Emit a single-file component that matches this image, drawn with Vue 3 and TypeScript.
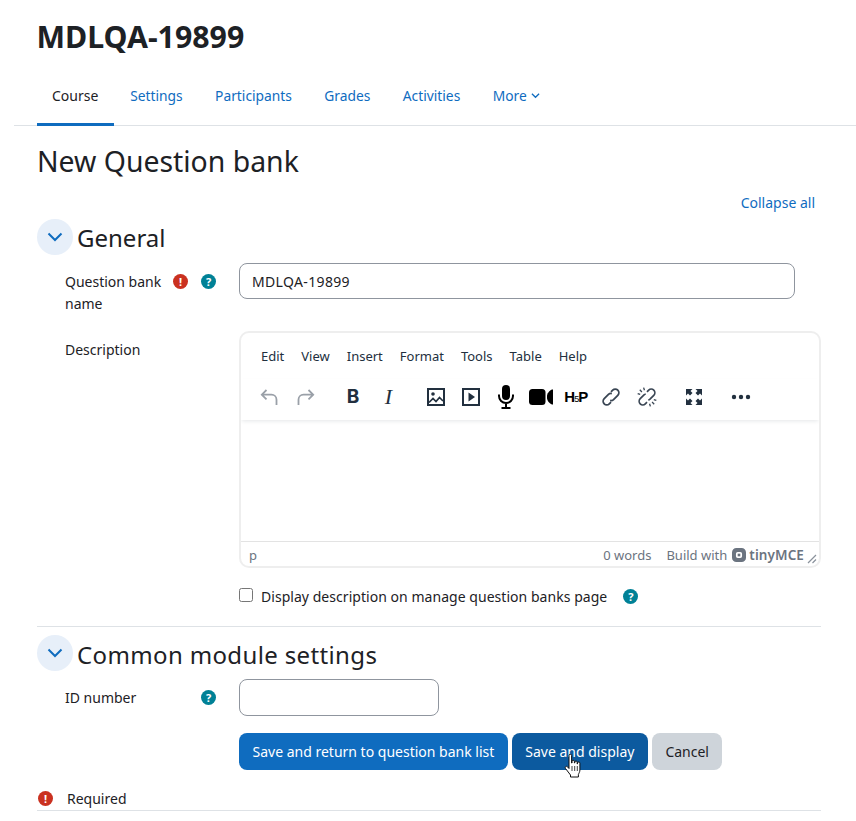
<script setup lang="ts">
const tabs = ["Settings", "Participants", "Grades", "Activities"];
const menus = ["Edit", "View", "Insert", "Format", "Tools", "Table", "Help"];
</script>

<template>
  <div class="page">
    <h1 class="title">MDLQA-19899</h1>

    <nav class="tabs">
      <a class="tab active">Course</a>
      <a v-for="t in tabs" :key="t" class="tab">{{ t }}</a>
      <a class="tab more">
        More
        <svg width="9" height="9" viewBox="0 0 10 10"><path d="M1 3l4 4 4-4" fill="none" stroke="#0f6cbf" stroke-width="1.4" /></svg>
      </a>
    </nav>

    <main class="content">
      <h2 class="heading">New Question bank</h2>
      <div class="collapse-row"><a>Collapse all</a></div>

      <div class="section-head">
        <span class="chevron">
          <svg width="16" height="16" viewBox="0 0 16 16"><path d="M1.500 4.500L8 11l6.500-6.500" fill="none" stroke="#0f6cbf" stroke-width="2" /></svg>
        </span>
        <h3>General</h3>
      </div>

      <div class="row name-row">
        <div class="label">
          <span class="label-text">Question bank name</span>
          <span class="badge red">!</span>
          <span class="badge teal">?</span>
        </div>
        <input class="text-input wide" value="MDLQA-19899" />
      </div>

      <div class="row desc-row">
        <div class="label"><span class="label-text">Description</span></div>
        <div class="control">
          <div class="editor">
            <div class="menubar">
              <span v-for="m in menus" :key="m">{{ m }}</span>
            </div>
            <div class="toolbar">
              <span class="tb">
                <svg width="20" height="20" viewBox="0 0 20 20"><path d="M7.500 3L2.800 7.700l4.700 4.700M3 7.700h9.500a5 5 0 0 1 5 5V18" fill="none" stroke="#9aa0a8" stroke-width="1.800" /></svg>
              </span>
              <span class="tb redo">
                <svg width="20" height="20" viewBox="0 0 20 20"><path d="M12.500 3l4.700 4.700-4.700 4.700M17 7.700H7.500a5 5 0 0 0-5 5V18" fill="none" stroke="#9aa0a8" stroke-width="1.800" /></svg>
              </span>
              <span class="tb group"><span class="glyph bold">B</span></span>
              <span class="tb"><span class="glyph italic">I</span></span>
              <span class="tb group">
                <svg width="20" height="20" viewBox="0 0 20 20"><rect x="2" y="2" width="16" height="16" fill="none" stroke="#22303f" stroke-width="2" /><circle cx="7" cy="7" r="1.800" fill="#22303f" /><path d="M3 15.500l4-4 3 3 3.500-4 3.500 3.500" fill="none" stroke="#22303f" stroke-width="1.700" /></svg>
              </span>
              <span class="tb">
                <svg width="20" height="20" viewBox="0 0 20 20"><rect x="2" y="2" width="16" height="16" fill="none" stroke="#22303f" stroke-width="2" /><path d="M7.500 5.500v9L14 10z" fill="#22303f" /></svg>
              </span>
              <span class="tb">
                <svg width="18" height="24" viewBox="0 0 18 24"><rect x="5" y="0" width="8" height="15" rx="4" fill="#000" /><path d="M2 9.500V11a7 7 0 0 0 14 0V9.500M9 18v4.500M4.500 23h9" fill="none" stroke="#000" stroke-width="2" /></svg>
              </span>
              <span class="tb">
                <svg width="24" height="16" viewBox="0 0 24 16"><rect x="0" y="0" width="16.500" height="16" rx="3.500" fill="#000" /><path d="M18 7c0-2 2-5.500 5-6.500h1v15h-1c-3-1-5-4.500-5-6.500z" fill="#000" /></svg>
              </span>
              <span class="tb"><span class="glyph h5p">H<span class="five">5</span>P</span></span>
              <span class="tb">
                <svg width="24" height="24" viewBox="0 0 20 20"><g transform="rotate(-45 10 10)" fill="none" stroke="#3a4654" stroke-width="1.500"><path d="M7 13H5a3 3 0 0 1 0-6h5a3 3 0 0 1 2.500 1.500" /><path d="M13 7h2a3 3 0 0 1 0 6h-5a3 3 0 0 1-2.500-1.500" /></g></svg>
              </span>
              <span class="tb">
                <svg width="24" height="24" viewBox="0 0 20 20"><g transform="rotate(-45 10 10)" fill="none" stroke="#3a4654" stroke-width="1.400"><path d="M7 13H5a3 3 0 0 1 0-6h4.500a3 3 0 0 1 1.500.5" /><path d="M13 7h2a3 3 0 0 1 0 6h-4.500a3 3 0 0 1-1.500-.5" /><path d="M10 1.500v2.500M6.500 2.500l1 2M13.500 2.500l-1 2M10 16v2.500M6.500 17.500l1-2M13.500 17.500l-1-2" stroke-width="1.100" /></g></svg>
              </span>
              <span class="tb group">
                <svg width="16" height="16" viewBox="0 0 16 16"><path d="M0 0h6.500L4.500 2l2 2L4 6.500l-2-2-2 2zM16 0v6.500l-2-2-2 2L9.500 4l2-2-2-2zM0 16V9.500l2 2 2-2L6.500 12l-2 2 2 2zM16 16H9.500l2-2-2-2L12 9.500l2 2 2-2z" fill="#22303f" /></svg>
              </span>
              <span class="tb group">
                <svg width="20" height="20" viewBox="0 0 20 20"><circle cx="3" cy="10" r="2.200" fill="#22303f" /><circle cx="10" cy="10" r="2.200" fill="#22303f" /><circle cx="17" cy="10" r="2.200" fill="#22303f" /></svg>
              </span>
            </div>
            <div class="edit-area"></div>
            <div class="statusbar">
              <span class="path">p</span>
              <span class="spacer"></span>
              <span>0 words</span>
              <span class="build">Build with</span>
              <svg class="tiny-logo" viewBox="0 0 16 16"><path fill-rule="evenodd" d="M5 0h6a5 5 0 0 1 5 5v6a5 5 0 0 1-5 5H5a5 5 0 0 1-5-5V5a5 5 0 0 1 5-5zm1.500 4.500A2 2 0 0 0 4.500 6.500v3a2 2 0 0 0 2 2h3a2 2 0 0 0 2-2v-3a2 2 0 0 0-2-2z" fill="#6b7480" /><rect x="6.500" y="6.500" width="3" height="3" fill="#6b7480" /></svg>
              <span class="tiny">tinyMCE</span>
              <svg class="grip" width="10" height="10" viewBox="0 0 10 10"><path d="M1 9l8-8M5.500 9L9 5.500" stroke="#8a929c" stroke-width="1.200" /></svg>
            </div>
          </div>
          <label class="check-row">
            <span class="checkbox"></span>
            <span class="check-text">Display description on manage question banks page</span>
            <span class="badge teal check-help">?</span>
          </label>
        </div>
      </div>

      <div class="section-head common">
        <span class="chevron">
          <svg width="16" height="16" viewBox="0 0 16 16"><path d="M1.500 4.500L8 11l6.500-6.500" fill="none" stroke="#0f6cbf" stroke-width="2" /></svg>
        </span>
        <h3>Common module settings</h3>
      </div>

      <div class="row id-row">
        <div class="label">
          <span class="label-text">ID number</span>
          <span class="badge teal">?</span>
        </div>
        <input class="text-input short" />
      </div>

      <div class="actions">
        <button class="btn primary">Save and return to question bank list</button>
        <button class="btn primary hover">
          Save and display
          <svg class="cursor" width="18" height="26" viewBox="0 0 18 26"><path d="M5 1.500a1.300 1.300 0 0 1 2.600 0V9h.4V7.500a1.200 1.200 0 0 1 2.400 0V9h.4V8.200a1.200 1.200 0 0 1 2.400 0V10h.3V9.200a1.200 1.200 0 0 1 2.400 0V16c0 2-1 3-1.500 4.500V23H6.500v-2L1.500 14.500c-1-1.500.8-3 2-1.700L5 14.500z" fill="#fff" stroke="#111" stroke-width="1" /><path d="M8 12v5M10.700 12v5M13.300 12v5" stroke="#111" stroke-width=".8" /></svg>
        </button>
        <button class="btn secondary">Cancel</button>
      </div>

      <div class="required">
        <span class="badge red">!</span>
        <span>Required</span>
      </div>
    </main>
  </div>
</template>

<style>
html,
body {
  margin: 0;
  background: #fff;
}
</style>

<style scoped>
.page {
  width: 856px;
  height: 821px;
  overflow: hidden;
  font-family: "Noto Sans", "Open Sans", sans-serif;
  font-size: 14px;
  color: #1d2125;
}

.title {
  margin: 0;
  padding: 17px 0 0 36.500px;
  height: 51px;
  font-size: 30.300px;
  line-height: 40px;
  font-weight: 700;
}

.tabs {
  display: flex;
  margin-left: 14px;
  padding-left: 23px;
  height: 58px;
  border-bottom: 1px solid #dee2e6;
  box-sizing: border-box;
}

.tab {
  display: flex;
  align-items: center;
  gap: 4px;
  height: 58px;
  padding: 0 16.200px 4px;
  box-sizing: border-box;
  color: #0f6cbf;
  font-size: 13.800px;
  white-space: nowrap;
}

.tab.active {
  color: #1d2125;
  width: 77px;
  font-size: 14px;
  padding: 0 0 0 15px;
  border-bottom: 3px solid #0f6cbf;
}

.content {
  padding: 0 35px 0 37px;
}

.heading {
  margin: 0;
  padding-top: 15px;
  font-size: 28.400px;
  line-height: 40px;
  font-weight: 400;
}

.collapse-row {
  display: flex;
  justify-content: flex-end;
  padding-right: 6px;
  height: 20px;
  margin-top: 12px;
  line-height: 20px;
  color: #0f6cbf;
}

.section-head {
  display: flex;
  align-items: center;
  gap: 4px;
  margin-top: 6px;
  height: 36px;
}

.section-head h3 {
  margin: 0;
  padding-top: 1px;
  font-size: 24px;
  line-height: 36px;
  font-weight: 400;
}

.chevron {
  display: flex;
  align-items: center;
  justify-content: center;
  width: 36px;
  height: 36px;
  border-radius: 50%;
  background: #e7eff9;
}

.row {
  display: flex;
}

.label {
  position: relative;
  width: 202px;
  padding-left: 28px;
  box-sizing: border-box;
  line-height: 22px;
}

.label-text {
  display: block;
  width: 108px;
}

.badge {
  display: inline-flex;
  align-items: center;
  justify-content: center;
  width: 15px;
  height: 15px;
  border-radius: 50%;
  color: #fff;
  font-size: 11px;
  font-weight: 700;
  line-height: 1;
}

.label .badge {
  position: absolute;
  top: 4px;
}

.label .badge.red {
  left: 136px;
}

.label .badge.teal {
  left: 164px;
}

.red {
  background: #ca3120;
}

.teal {
  background: #008196;
}

.name-row {
  margin-top: 8px;
  height: 68px;
}

.name-row .label {
  padding-top: 8px;
}

.name-row .label .badge {
  top: 11px;
}

.text-input {
  height: 36px;
  box-sizing: border-box;
  border: 1px solid #8f959e;
  border-radius: 8px;
  padding: 0 12px;
  font: inherit;
  letter-spacing: 0.35px;
  color: #1d2125;
  background: #fff;
  outline: none;
}

.wide {
  width: 556px;
}

.short {
  width: 200px;
  height: 37px;
}

.control {
  width: 582px;
}

.editor {
  height: 237px;
  box-sizing: border-box;
  border: 2px solid #eeeeee;
  border-radius: 10px;
  display: flex;
  flex-direction: column;
  overflow: hidden;
}

.desc-row .label {
  padding-top: 8px;
}

.menubar {
  display: flex;
  gap: 17px;
  height: 46px;
  padding: 12px 0 0 20px;
  box-sizing: border-box;
  font-size: 13px;
  line-height: 22px;
  color: #222f3e;
}

.toolbar {
  display: flex;
  align-items: center;
  height: 41px;
  padding: 0 0 6px 10.400px;
  box-sizing: border-box;
  box-shadow: 0 2px 4px -1px rgba(34, 47, 62, 0.12);
  position: relative;
}

.tb {
  display: flex;
  align-items: center;
  justify-content: center;
  width: 35.200px;
  height: 30px;
  flex: none;
}

.tb.redo {
  margin-left: 1.800px;
}

.tb.group {
  margin-left: 12px;
}

.glyph {
  color: #222f3e;
}

.bold {
  font-size: 19px;
  font-weight: 700;
  font-family: "Inter", sans-serif;
}

.italic {
  font-size: 22px;
  font-style: italic;
  font-family: "Liberation Serif", serif;
}

.h5p {
  font-size: 15px;
  font-weight: 700;
  color: #000;
  font-family: "Liberation Sans", sans-serif;
}

.five {
  font-size: 9px;
  font-weight: 400;
  margin: 0 -1px;
}

.edit-area {
  flex: 1;
}

.statusbar {
  display: flex;
  align-items: center;
  height: 25px;
  border-top: 1px solid #e3e3e3;
  padding: 2px 2px 0 8px;
  box-sizing: border-box;
  font-size: 13px;
  color: #6b7480;
}

.spacer {
  flex: 1;
}

.build {
  margin-left: 15px;
}

.tiny-logo {
  width: 14px;
  height: 14px;
  margin-left: 5px;
}

.tiny {
  margin-left: 3px;
  font-weight: 600;
  font-size: 13.500px;
  letter-spacing: 0.1px;
}

.grip {
  margin-left: 3px;
  align-self: flex-end;
  margin-bottom: 2px;
}

.check-row {
  display: flex;
  align-items: center;
  gap: 8px;
  margin-top: 17px;
  height: 22px;
}

.check-text {
  letter-spacing: 0.04px;
}

.checkbox {
  width: 14px;
  height: 14px;
  margin-top: -3px;
  border: 1px solid #767676;
  border-radius: 2.500px;
  box-sizing: border-box;
  background: #fff;
  flex: none;
}

.check-help {
  margin-left: 8px;
}

.section-head.common {
  margin-top: 19px;
  border-top: 1px solid #dee2e6;
  padding-top: 8px;
  height: 45px;
  box-sizing: border-box;
}

.common h3 {
  padding-top: 3px;
  letter-spacing: 0.36px;
}

.id-row {
  margin-top: 8px;
  height: 54px;
}

.id-row .label {
  padding-top: 8px;
}

.id-row .label .badge {
  top: 11px;
}

.actions {
  display: flex;
  gap: 4px;
  margin-left: 202px;
}

.btn {
  position: relative;
  height: 37px;
  border: none;
  border-radius: 8px;
  padding: 0 13.500px;
  font: inherit;
  white-space: nowrap;
}

.primary {
  background: #0f6cbf;
  color: #fff;
}

.primary.hover {
  background: #0c5a9f;
}

.secondary {
  background: #ced4da;
  color: #1d2125;
}

.cursor {
  position: absolute;
  left: 52px;
  top: 21px;
}

.required {
  display: flex;
  align-items: center;
  gap: 14px;
  margin-top: 16px;
  height: 24px;
  padding-left: 1px;
  border-bottom: 1px solid #dee2e6;
}
</style>
